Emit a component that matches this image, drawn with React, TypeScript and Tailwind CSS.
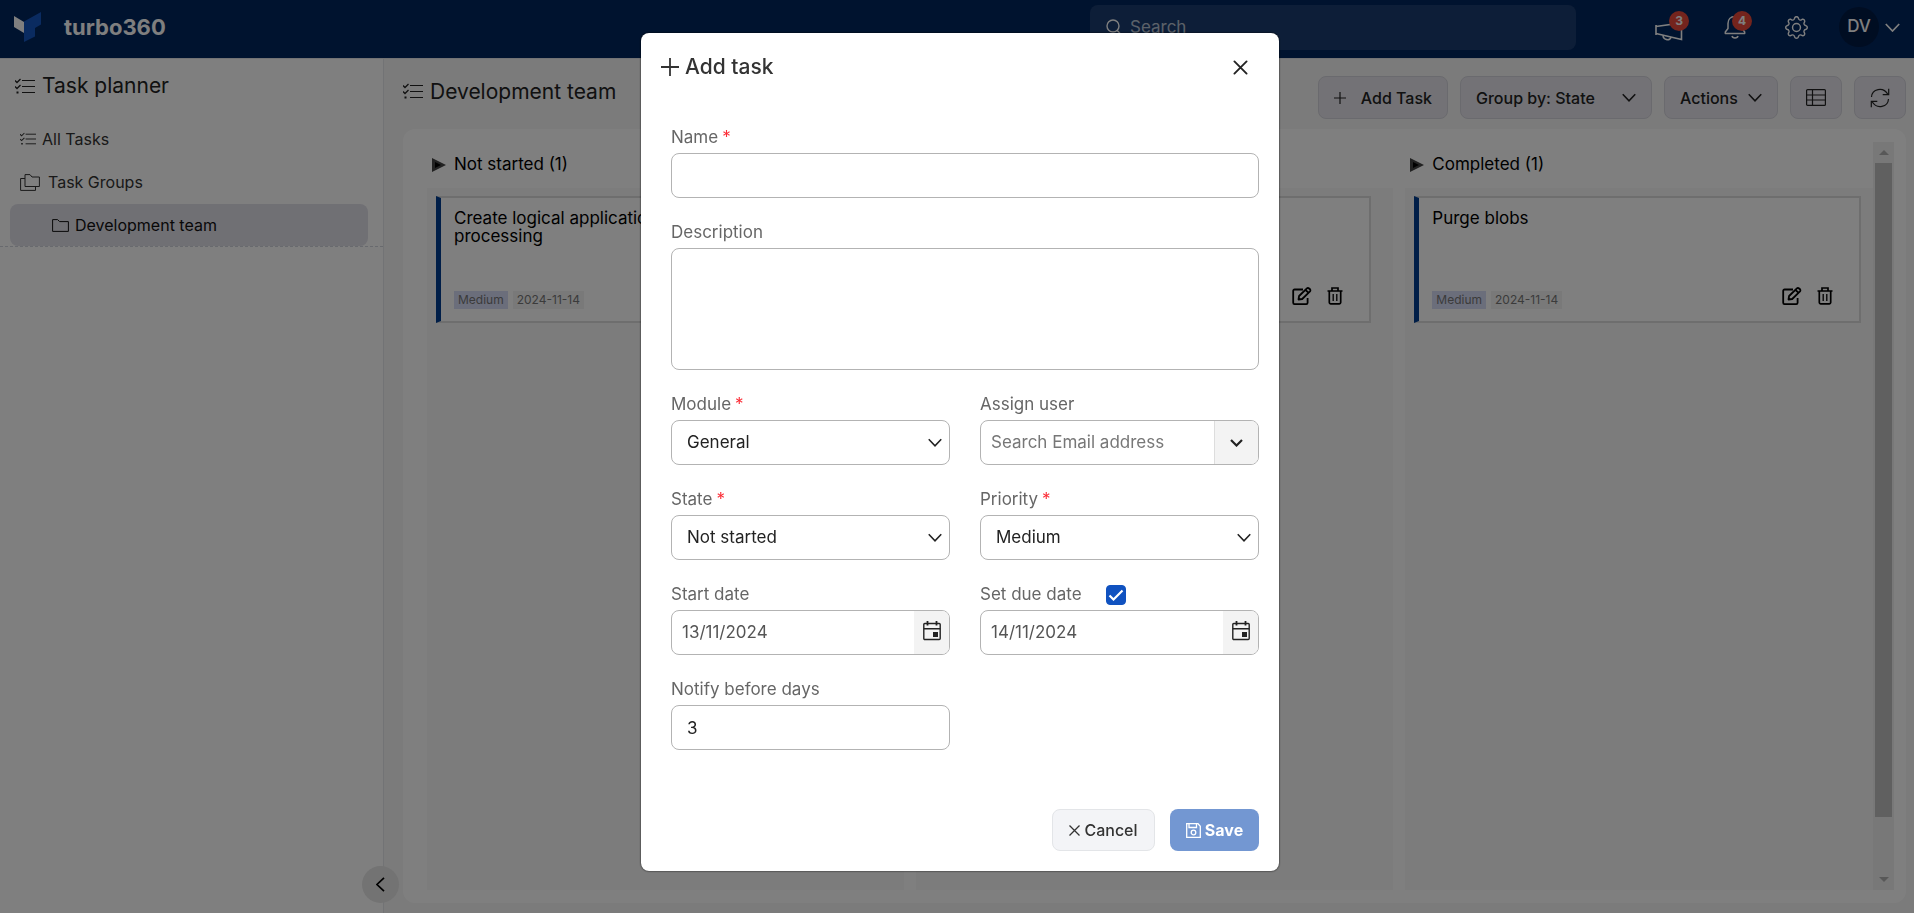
import { useState } from "react";
import type { ReactNode } from "react";
import { BsGear } from "react-icons/bs";

type IconProps = { className?: string };

function TurboLogo() {
    return (
        <svg width="27" height="30" viewBox="0 0 27 30" aria-hidden="true">
            <path d="M0 4l10 6v11L0 15z" fill="#ffffff" />
            <path d="M10 9.500L27 0v12.500l-6 3.500v8.500L10 30z" fill="#1556c0" />
        </svg>
    );
}

function ChecklistIcon({ className }: IconProps) {
    return (
        <svg className={className} viewBox="0 0 20 17" fill="none" stroke="currentColor" aria-hidden="true">
            <path d="M7 2.500h13M7 8.500h13M7 14.500h13" strokeWidth="1.200" />
            <path d="M0 2.500l2 2L5.500 1M0 8.500l2 2L5.500 7" strokeWidth="1.300" />
            <path d="M1.500 14.500h2" strokeWidth="2" />
        </svg>
    );
}

function FoldersIcon({ className }: IconProps) {
    return (
        <svg className={className} viewBox="0 0 20 17" fill="none" stroke="currentColor" strokeLinejoin="round" aria-hidden="true">
            <path d="M5 12.500V.6h5l2 2.400h7.400v9.500z" />
            <path d="M5 4.500H.6v11.900h14.900v-3.900" />
        </svg>
    );
}

function FolderIcon({ className }: IconProps) {
    return (
        <svg className={className} viewBox="0 0 17 13" fill="none" stroke="currentColor" strokeLinejoin="round" aria-hidden="true">
            <path d="M.6 12.400V.6h5l2 2h8.800v9.800z" />
        </svg>
    );
}

function SearchIcon({ className }: IconProps) {
    return (
        <svg className={className} viewBox="0 0 16 17" fill="none" stroke="currentColor" strokeWidth="1.400" aria-hidden="true">
            <circle cx="7" cy="7" r="6" />
            <path d="M11.200 11.500L16 16.500" />
        </svg>
    );
}

function MegaphoneIcon({ className }: IconProps) {
    return (
        <svg className={className} viewBox="0 0 28 20" fill="none" stroke="currentColor" strokeWidth="1.600" aria-hidden="true">
            <path d="M1 4v10M1 5.500L26.500 2v16.500L1 12.500" />
            <path d="M8 14.500c.3 5 7.500 5.500 8 1.700" />
        </svg>
    );
}

function BellIcon({ className }: IconProps) {
    return (
        <svg className={className} viewBox="0 0 22 24" fill="none" stroke="currentColor" strokeWidth="1.500" strokeLinejoin="round" aria-hidden="true">
            <path d="M11 1.500c-4.500 0-7 3-7 7v5L1.300 17v1.500h19.400V17L18 13.500v-5c0-4-2.500-7-7-7z" />
            <path d="M8 21c.5 2.500 5.500 2.500 6 0" />
        </svg>
    );
}

function ChevronIcon({ className }: IconProps) {
    return (
        <svg className={className} viewBox="0 0 15 9" fill="none" stroke="currentColor" strokeWidth="1.700" aria-hidden="true">
            <path d="M.8 1l6.700 7 6.700-7" />
        </svg>
    );
}

function PlusIcon({ className }: IconProps) {
    return (
        <svg className={className} viewBox="0 0 18 18" fill="none" stroke="currentColor" strokeWidth="1.800" aria-hidden="true">
            <path d="M9 0v18M0 9h18" />
        </svg>
    );
}

function CrossIcon({ className }: IconProps) {
    return (
        <svg className={className} viewBox="0 0 16 16" fill="none" stroke="currentColor" strokeWidth="2" strokeLinecap="round" aria-hidden="true">
            <path d="M1.500 1.500l13 13M14.500 1.500l-13 13" />
        </svg>
    );
}

function TableIcon({ className }: IconProps) {
    return (
        <svg className={className} viewBox="0 0 20 17" fill="none" stroke="currentColor" strokeWidth="1.200" aria-hidden="true">
            <rect x=".6" y=".6" width="18.800" height="15.800" rx="1" />
            <path d="M.6 6h18.800M.6 11h18.800M6.500.6v15.800" />
        </svg>
    );
}

function RefreshIcon({ className }: IconProps) {
    return (
        <svg className={className} viewBox="0 0 20 20" fill="none" stroke="currentColor" strokeWidth="1.200" aria-hidden="true">
            <path d="M1.500 9C2 1 13-2 18 6.500M18.500 11C18 19 7 22 2 13.500" />
            <path d="M18.700.8v5.900h-6M1.300 19.200v-5.900h6" />
        </svg>
    );
}

function EditIcon({ className }: IconProps) {
    return (
        <svg className={className} viewBox="0 0 20 18" fill="none" stroke="currentColor" strokeWidth="1.800" strokeLinejoin="round" aria-hidden="true">
            <path d="M11 2.500H2.500a1.300 1.300 0 0 0-1.300 1.300v12a1.300 1.300 0 0 0 1.300 1.300h11.800a1.300 1.300 0 0 0 1.300-1.300V11" />
            <path d="M6.500 12.500l.6-3.500 7.800-7.600c1.300-1.300 4.600 1.300 3.100 2.900L10.200 12z" />
            <path d="M13.500 3l2.900 2.700" />
        </svg>
    );
}

function TrashIcon({ className }: IconProps) {
    return (
        <svg className={className} viewBox="0 0 16 18" fill="none" stroke="currentColor" strokeWidth="1.700" aria-hidden="true">
            <path d="M.5 4h15M5 4V1h6v3M2.300 4v11.500a1.300 1.300 0 0 0 1.300 1.300h8.800a1.300 1.300 0 0 0 1.300-1.300V4" />
            <path d="M6.200 7v7M9.800 7v7" strokeWidth="1.300" />
        </svg>
    );
}

function CalendarIcon({ className }: IconProps) {
    return (
        <svg className={className} viewBox="0 0 18 20" fill="none" stroke="currentColor" strokeWidth="1.400" aria-hidden="true">
            <rect x=".8" y="2.500" width="16.400" height="16" rx="1" />
            <path d="M.8 7.800h16.400" />
            <path d="M4.500 0v4.500M13.500 0v4.500" strokeWidth="1.800" />
            <path d="M10 11h5v5h-5z" fill="currentColor" stroke="none" />
        </svg>
    );
}

function SaveIcon({ className }: IconProps) {
    return (
        <svg className={className} viewBox="0 0 15 15" fill="none" stroke="currentColor" strokeWidth="1.300" aria-hidden="true">
            <path d="M.7.7h11.300l2.300 2.500v11.100H.7z" />
            <path d="M3 .7v3.800h7.500V.7" />
            <circle cx="7.500" cy="9.500" r="2.300" />
        </svg>
    );
}

function Header() {
    return (
        <header className="flex h-[59px] shrink-0 items-center border-b border-gray-200 bg-[#00265e] pr-3.5 pl-3.5 text-white">
            <a href="#" className="flex items-center gap-[23px] pb-1">
                <TurboLogo />
                <span className="text-[22px] font-bold">turbo360</span>
            </a>

            <div className="mr-[79px] mb-1 ml-auto flex h-[45px] w-[486px] items-center gap-2 rounded-lg bg-[#1b3d70] px-4">
                <SearchIcon className="h-[17px] w-4 shrink-0" />
                <input
                    type="search"
                    aria-label="Search"
                    placeholder="Search"
                    className="w-full bg-transparent pt-0.5 text-[17px] text-white placeholder-white/70 outline-none"
                />
            </div>

            <div className="flex items-center">
                <button type="button" aria-label="Announcements" className="relative mt-1 mr-[41px]">
                    <MegaphoneIcon className="h-5 w-7" />
                    <span className="absolute -top-2.5 left-3.5 flex size-5 items-center justify-center rounded-full bg-[#e8493a] text-xs font-bold text-white">
                        3
                    </span>
                </button>
                <button type="button" aria-label="Notifications" className="relative mr-[39px] mb-1">
                    <BellIcon className="h-6 w-[22px]" />
                    <span className="absolute -top-1 left-2 flex size-5 items-center justify-center rounded-full bg-[#e8493a] text-xs font-bold text-white">
                        4
                    </span>
                </button>
                <button type="button" aria-label="Settings" className="mr-[31px] mb-1">
                    <BsGear className="size-[23px]" />
                </button>
                <button type="button" className="mb-1 flex items-center gap-1.5">
                    <span className="flex size-10 items-center justify-center rounded-full bg-[#001a45] text-[17px] font-medium">DV</span>
                    <ChevronIcon className="h-[9px] w-[15px]" />
                </button>
            </div>
        </header>
    );
}

function Sidebar() {
    return (
        <aside className="relative w-96 shrink-0 border-r border-gray-200 bg-white text-[#333]">
            <h1 className="flex items-center gap-[7px] px-[15px] pt-[13px] text-[21px] leading-7 text-[#222]">
                <ChecklistIcon className="h-[17px] w-5" />
                Task planner
            </h1>
            <nav className="border-b border-dashed border-gray-300 pt-[18px] text-base">
                <a href="#" className="flex h-[42px] items-center gap-1.5 px-5">
                    <ChecklistIcon className="h-3.5 w-4" />
                    All Tasks
                </a>
                <a href="#" className="flex h-11 items-center gap-2 px-5">
                    <FoldersIcon className="h-[17px] w-5" />
                    Task Groups
                </a>
                <a href="#" className="mr-[15px] ml-2.5 flex h-[42px] items-center gap-1.5 rounded-lg bg-[#e1e0e9] pl-[42px] text-[#111]">
                    <FolderIcon className="h-[13px] w-[17px]" />
                    Development team
                </a>
            </nav>
            <button
                type="button"
                aria-label="Collapse sidebar"
                className="absolute -right-4 bottom-2.5 z-10 flex size-[37px] items-center justify-center rounded-full bg-[#e6e6e6] text-black"
            >
                <ChevronIcon className="h-[9px] w-[15px] rotate-90" />
            </button>
        </aside>
    );
}

function ToolbarButton({ label, className, children }: { label?: string; className: string; children: ReactNode }) {
    return (
        <button
            type="button"
            aria-label={label}
            className={`flex h-[43px] items-center rounded-lg border border-[#d5d4dc] bg-[#e6e5ed] text-base font-medium text-[#222] ${className}`}
        >
            {children}
        </button>
    );
}

const columns = [
    { name: "Not started", task: "Create logical application processing" },
    { name: "In progress", task: "Review alerts" },
    { name: "Completed", task: "Purge blobs" },
];

function BoardColumn({ name, task }: { name: string; task: string }) {
    return (
        <section className="flex w-[33%] shrink-0 flex-col">
            <h3 className="flex h-[46px] items-center gap-2 pl-[5px] text-[17px] text-black">
                <svg width="14" height="14" viewBox="0 0 14 14" aria-hidden="true">
                    <path d="M0 0l14 7-14 7z" fill="#444" />
                    <path d="M3 4l6 3-6 3z" fill="#000" />
                </svg>
                {name} (1)
            </h3>
            <div className="flex-1 bg-[#f9f9f9] pt-2 pr-[22px] pl-[9px]">
                <article className="flex h-[127px] flex-col justify-between border-2 border-l-[5px] border-[#dcdcdc] border-l-[#003c90] bg-white pt-[11px] pr-[26px] pb-3 pl-[13px]">
                    <h4 className="max-w-[240px] text-[17px] leading-[18px] text-black">{task}</h4>
                    <div className="flex items-end text-xs text-[#777]">
                        <span className="mr-[5px] bg-[#d6dcf7] px-1 leading-[18px]">Medium</span>
                        <span className="bg-[#f3f3f3] px-1 leading-[18px]">2024-11-14</span>
                        <button type="button" aria-label="Edit task" className="mr-[15px] mb-1 ml-auto text-black">
                            <EditIcon className="h-[18px] w-5" />
                        </button>
                        <button type="button" aria-label="Delete task" className="mb-1 text-black">
                            <TrashIcon className="h-[18px] w-4" />
                        </button>
                    </div>
                </article>
            </div>
        </section>
    );
}

function Board() {
    return (
        <main className="flex min-w-0 flex-1 flex-col bg-[#f6f6f6] pt-[17px] pr-2 pb-2.5 pl-[19px]">
            <div className="flex items-center gap-3">
                <h2 className="mr-auto mb-3 flex items-center gap-[7px] text-[21px] leading-7 text-[#222]">
                    <ChecklistIcon className="h-[17px] w-5" />
                    Development team
                </h2>
                <ToolbarButton className="w-[130px] justify-between px-[15px]">
                    <PlusIcon className="size-3" />
                    Add Task
                </ToolbarButton>
                <ToolbarButton className="w-48 justify-between px-[15px]">
                    Group by: State
                    <ChevronIcon className="h-[9px] w-3.5" />
                </ToolbarButton>
                <ToolbarButton className="w-[114px] justify-between px-[15px]">
                    Actions
                    <ChevronIcon className="h-[9px] w-3.5" />
                </ToolbarButton>
                <ToolbarButton label="Table view" className="w-[52px] justify-center">
                    <TableIcon className="h-[17px] w-5" />
                </ToolbarButton>
                <ToolbarButton label="Refresh" className="w-[52px] justify-center">
                    <RefreshIcon className="size-5" />
                </ToolbarButton>
            </div>

            <div className="mt-2.5 flex flex-1 rounded-xl bg-white py-[13px] pr-3 pl-6">
                <div className="flex min-w-0 flex-1 gap-3 overflow-hidden">
                    {columns.map((column) => (
                        <BoardColumn key={column.name} name={column.name} task={column.task} />
                    ))}
                </div>
                <div className="flex w-[21px] flex-col items-center bg-[#f0f0f0] py-2">
                    <span className="border-x-[5px] border-b-[5px] border-x-transparent border-b-[#b0b0b0]" />
                    <span className="my-2 h-[654px] w-[17px] bg-[#c0c0c0]" />
                    <span className="mt-auto border-x-[5px] border-t-[5px] border-x-transparent border-t-[#b0b0b0]" />
                </div>
            </div>
        </main>
    );
}

const inputStyle =
    "h-[45px] w-full rounded-lg border border-[#b3b3b3] bg-white px-[15px] text-[17px] text-[#222] outline-none focus:border-blue-600";

function Label({ htmlFor, required, children }: { htmlFor: string; required?: boolean; children: ReactNode }) {
    return (
        <label htmlFor={htmlFor} className="mb-0.5 flex h-[26px] items-center gap-1 text-[17px] text-[#666]">
            {children}
            {required && <span className="text-red-500">*</span>}
        </label>
    );
}

function SelectField({ id, label, options }: { id: string; label: string; options: string[] }) {
    return (
        <div>
            <Label htmlFor={id} required>{label}</Label>
            <div className="relative">
                <select id={id} className={`${inputStyle} appearance-none`}>
                    {options.map((option) => (
                        <option key={option}>{option}</option>
                    ))}
                </select>
                <ChevronIcon className="pointer-events-none absolute top-[18px] right-2 h-[9px] w-3.5 text-[#222]" />
            </div>
        </div>
    );
}

function DateInput({ id, label, initial }: { id: string; label?: string; initial: string }) {
    const [value, setValue] = useState(initial);

    return (
        <div className="flex h-[45px] overflow-hidden rounded-lg border border-[#b3b3b3]">
            <input
                id={id}
                type="text"
                aria-label={label}
                value={value}
                onChange={(event) => setValue(event.target.value)}
                className="min-w-0 flex-1 px-2.5 text-[17px] text-[#555] outline-none"
            />
            <button type="button" aria-label="Open calendar" className="flex w-[35px] items-center justify-center bg-[#f3f3f3] pb-1 text-[#222]">
                <CalendarIcon className="h-5 w-[18px]" />
            </button>
        </div>
    );
}

function AddTaskDialog() {
    const [hasDueDate, setHasDueDate] = useState(true);

    return (
        <div
            role="dialog"
            aria-modal="true"
            aria-labelledby="dialog-title"
            className="w-full max-w-[638px] rounded-lg bg-white px-5 pt-5 pb-5 shadow-[0_0_2px_#000]"
        >
            <div className="flex h-7 items-center justify-between pr-[11px]">
                <h2 id="dialog-title" className="flex items-center gap-1.5 text-[21px] font-medium text-[#333]">
                    <PlusIcon className="size-[18px]" />
                    Add task
                </h2>
                <button type="button" aria-label="Close" className="text-[#222]">
                    <CrossIcon className="size-[15px]" />
                </button>
            </div>

            <form className="mt-11 pl-2.5" onSubmit={(event) => event.preventDefault()}>
                <div className="grid grid-cols-2 gap-x-[30px] gap-y-[22px]">
                    <div className="col-span-2">
                        <Label htmlFor="name" required>Name</Label>
                        <input id="name" type="text" className={`${inputStyle} block`} />
                    </div>
                    <div className="col-span-2">
                        <Label htmlFor="description">Description</Label>
                        <textarea
                            id="description"
                            className="block h-[122px] w-full resize-none rounded-lg border border-[#b3b3b3] px-[15px] py-2 text-[17px] outline-none focus:border-blue-600"
                        />
                    </div>
                    <SelectField id="module" label="Module" options={["General"]} />
                    <div>
                        <Label htmlFor="assign">Assign user</Label>
                        <div className="flex h-[45px] overflow-hidden rounded-lg border border-[#b3b3b3]">
                            <input
                                id="assign"
                                type="text"
                                placeholder="Search Email address"
                                className="min-w-0 flex-1 px-2.5 text-[17px] placeholder-[#777] outline-none"
                            />
                            <button type="button" aria-label="Show users" className="flex w-11 items-center justify-center border-l border-[#ddd] bg-[#f3f3f3] text-[#222]">
                                <svg width="13" height="8" viewBox="0 0 13 8" fill="none" stroke="currentColor" strokeWidth="2.200" aria-hidden="true">
                                    <path d="M1 1l5.500 5.500L12 1" />
                                </svg>
                            </button>
                        </div>
                    </div>
                    <SelectField id="state" label="State" options={["Not started", "In progress", "Completed"]} />
                    <SelectField id="priority" label="Priority" options={["Medium", "Low", "High"]} />
                    <div>
                        <Label htmlFor="start">Start date</Label>
                        <DateInput id="start" initial="13/11/2024" />
                    </div>
                    <div>
                        <div className="flex items-start gap-6">
                            <Label htmlFor="has-due">Set due date</Label>
                            <span className="relative mt-[3px] flex size-5">
                                <input
                                    id="has-due"
                                    type="checkbox"
                                    checked={hasDueDate}
                                    onChange={(event) => setHasDueDate(event.target.checked)}
                                    className="size-5 appearance-none rounded-sm border border-[#1052c0] checked:bg-[#1052c0]"
                                />
                                <svg className="pointer-events-none absolute top-1 left-0.5 h-3 w-4" viewBox="0 0 16 12" fill="none" stroke="#fff" strokeWidth="2.200" aria-hidden="true">
                                    <path d="M1.500 6.500L5.500 10.500 14.500 1.500" />
                                </svg>
                            </span>
                        </div>
                        <DateInput id="due" label="Due date" initial="14/11/2024" />
                    </div>
                    <div>
                        <Label htmlFor="notify">Notify before days</Label>
                        <input id="notify" type="text" inputMode="numeric" defaultValue="3" className={`${inputStyle} block`} />
                    </div>
                </div>

                <div className="mt-[59px] flex justify-end gap-[15px]">
                    <button
                        type="button"
                        className="flex h-[42px] w-[103px] items-center justify-center gap-1 rounded-lg border border-[#e3e5e8] bg-[#f3f4f7] text-base font-medium text-[#333]"
                    >
                        <svg width="11" height="11" viewBox="0 0 11 11" stroke="currentColor" strokeWidth="1.300" aria-hidden="true">
                            <path d="M.5.5l10 10M10.500.5l-10 10" />
                        </svg>
                        Cancel
                    </button>
                    <button type="submit" className="flex h-[42px] w-[89px] items-center justify-center gap-1 rounded-lg bg-[#7397d2] text-base font-bold text-white">
                        <SaveIcon className="size-[15px]" />
                        Save
                    </button>
                </div>
            </form>
        </div>
    );
}

export default function App() {
    return (
        <div className="flex min-h-screen flex-col font-['Inter','Lato',sans-serif]">
            <Header />
            <div className="flex flex-1">
                <Sidebar />
                <Board />
            </div>

            <div className="fixed inset-0 z-20 flex items-start justify-center bg-black/50 pt-[33px] pl-1.5">
                <AddTaskDialog />
            </div>
        </div>
    );
}
